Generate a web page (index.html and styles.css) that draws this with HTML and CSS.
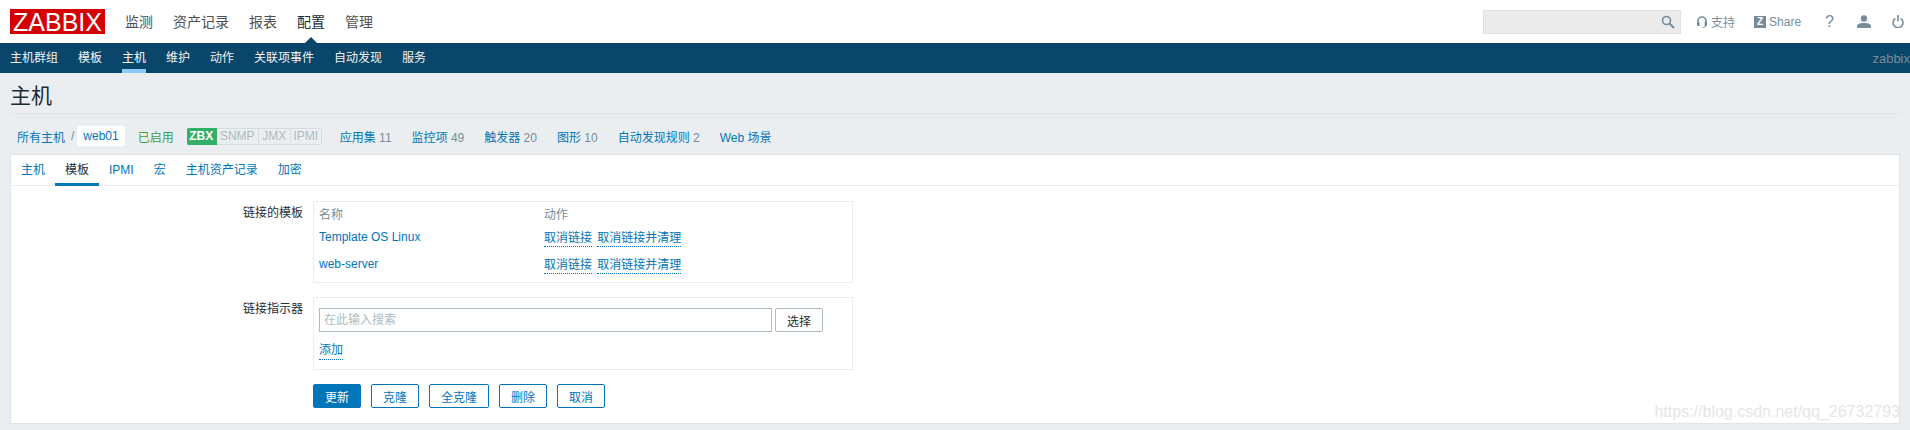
FILE: index.html
```html
<!DOCTYPE html>
<html lang="zh-CN">
<head>
    <meta charset="UTF-8">
    <title>主机</title>
    <link rel="stylesheet" href="styles.css">
</head>
<body>
    <header class="Header">
        <div class="logo">ZABBIX</div>
        <nav class="topnav">
            <a href="#">监测</a>
            <a href="#">资产记录</a>
            <a href="#">报表</a>
            <a href="#" class="active">配置</a>
            <a href="#">管理</a>
        </nav>
        <div class="tools">
            <div class="search">
                <svg class="icon-search" viewBox="0 0 14 14" width="14" height="14"><circle cx="5.5" cy="5.5" r="4" fill="none" stroke="#768d99" stroke-width="1.6"/><path d="M8.5 8.5L13 13" stroke="#768d99" stroke-width="2"/></svg>
            </div>
            <a href="#" class="tool support">
                <svg viewBox="0 0 10 12" width="10" height="12"><path d="M1 7V5a4 4 0 0 1 8 0v2" fill="none" stroke="#768d99" stroke-width="1.6"/><rect x="0" y="6" width="2.4" height="4" fill="#768d99"/><rect x="7.6" y="6" width="2.4" height="4" fill="#768d99"/><path d="M8.5 10c0 1-1.500 1.500-3 1.500" fill="none" stroke="#768d99"/></svg>
                <span>支持</span>
            </a>
            <a href="#" class="tool share"><span class="zbox">Z</span><span>Share</span></a>
            <a href="#" class="tool help">?</a>
            <a href="#" class="tool user">
                <svg viewBox="0 0 14 13" width="14" height="13"><circle cx="7" cy="3.500" r="3.200" fill="#768d99"/><path d="M0 13v-2c0-2 3-3 7-3s7 1 7 3v2z" fill="#768d99"/></svg>
            </a>
            <a href="#" class="tool power">
                <svg viewBox="0 0 12 13" width="12" height="13"><path d="M3.300 3.500a5 5 0 1 0 5.400 0" fill="none" stroke="#768d99" stroke-width="1.600"/><path d="M6 0v6.500" stroke="#768d99" stroke-width="1.600"/></svg>
            </a>
        </div>
    </header>
    <div class="subnav">
        <nav class="subnav-links">
            <a href="#">主机群组</a>
            <a href="#">模板</a>
            <a href="#" class="active">主机</a>
            <a href="#">维护</a>
            <a href="#">动作</a>
            <a href="#">关联项事件</a>
            <a href="#">自动发现</a>
            <a href="#">服务</a>
        </nav>
        <span class="server-name">zabbix</span>
    </div>
    <div class="Contents">
        <h1 class="page-title">主机</h1>
        <div class="crumbs">
            <a href="#" class="crumb-all">所有主机</a>
            <span class="crumb-sep">/</span>
            <a href="#" class="crumb-host">web01</a>
            <span class="status">已启用</span>
            <div class="tags">
                <span class="tag on">ZBX</span>
                <span class="tag snmp">SNMP</span>
                <span class="tag jmx">JMX</span>
                <span class="tag ipmi">IPMI</span>
            </div>
            <div class="host-links">
                <span><a href="#">应用集</a> 11</span>
                <span><a href="#">监控项</a> 49</span>
                <span><a href="#">触发器</a> 20</span>
                <span><a href="#">图形</a> 10</span>
                <span><a href="#">自动发现规则</a> 2</span>
                <span><a href="#">Web 场景</a></span>
            </div>
        </div>
        <div class="card">
            <div class="tabs">
                <a href="#">主机</a>
                <a href="#" class="active">模板</a>
                <a href="#">IPMI</a>
                <a href="#">宏</a>
                <a href="#">主机资产记录</a>
                <a href="#">加密</a>
            </div>
            <form class="form">
                <label class="form-label">链接的模板</label>
                <div class="box box-list">
                    <table class="list">
                        <tr class="list-head"><th>名称</th><th>动作</th></tr>
                        <tr>
                            <td><a href="#">Template OS Linux</a></td>
                            <td><a href="#" class="dotted">取消链接</a> <a href="#" class="dotted">取消链接并清理</a></td>
                        </tr>
                        <tr>
                            <td><a href="#">web-server</a></td>
                            <td><a href="#" class="dotted">取消链接</a> <a href="#" class="dotted">取消链接并清理</a></td>
                        </tr>
                    </table>
                </div>
                <label class="form-label">链接指示器</label>
                <div class="box box-search">
                    <div class="search-row">
                        <input type="text" class="text-input" placeholder="在此输入搜索">
                        <button type="button" class="btn-grey">选择</button>
                    </div>
                    <a href="#" class="dotted add-link">添加</a>
                </div>
                <div class="buttons">
                    <button type="button" class="btn primary">更新</button>
                    <button type="button" class="btn">克隆</button>
                    <button type="button" class="btn wide">全克隆</button>
                    <button type="button" class="btn">删除</button>
                    <button type="button" class="btn">取消</button>
                </div>
            </form>
        </div>
    </div>
    <div class="watermark">https://blog.csdn.net/qq_26732793</div>
</body>
</html>
```

FILE: styles.css
```css
body{
    margin: 0;
    width: 1910px;
    height: 430px;
    overflow: hidden;
    position: relative;
    background-color: #ebeef0;
    color: #1f2c33;
    font-family: "Liberation Sans", "Noto Sans CJK SC", sans-serif;
    font-size: 12px;
}
a{
    color: #0275b8;
    text-decoration: none;
}
.Header {
    display: flex;
    align-items: center;
    height: 43px;
    padding: 0 6px 0 10px;
    background-color: #ffffff;
}
.logo {
    width: 95px;
    height: 25px;
    line-height: 26px;
    background-color: #d40000;
    color: #ffffff;
    font-size: 25px;
    text-align: center;
}
.topnav {
    display: flex;
    gap: 20px;
    margin-left: 20px;
}
.topnav a {
    position: relative;
    color: #4f4f4f;
    font-size: 14px;
    line-height: 20px;
}
.topnav a.active {
    color: #1f2c33;
}
.topnav a.active::after {
    content: "";
    position: absolute;
    left: 6px;
    bottom: -13px;
    border-left: 8px solid transparent;
    border-right: 8px solid transparent;
    border-bottom: 8px solid #0a466a;
}
.tools {
    display: flex;
    align-items: center;
    margin-left: auto;
}
.search {
    display: flex;
    align-items: center;
    justify-content: flex-end;
    box-sizing: border-box;
    width: 198px;
    height: 24px;
    padding-right: 5px;
    background-color: #ebebeb;
    border: 1px solid #e0e0e0;
}
.tool {
    display: flex;
    align-items: center;
    color: #768d99;
}
.support {
    gap: 4px;
    margin-left: 16px;
}
.share {
    gap: 3px;
    margin-left: 19px;
}
.zbox {
    width: 12px;
    height: 12px;
    line-height: 12px;
    background-color: #768d99;
    color: #ffffff;
    font-size: 10px;
    font-weight: bold;
    text-align: center;
}
.help {
    margin-left: 24px;
    font-size: 16px;
}
.user {
    margin-left: 23px;
}
.power {
    margin-left: 21px;
}
.subnav {
    display: flex;
    align-items: center;
    justify-content: space-between;
    height: 30px;
    padding-left: 10px;
    background-color: #0a466a;
}
.subnav-links {
    display: flex;
    gap: 20px;
}
.subnav-links a {
    height: 30px;
    line-height: 30px;
    box-sizing: border-box;
    color: #f2f2f2;
}
.subnav-links a.active {
    color: #ffffff;
    border-bottom: 4px solid #8ccbf7;
}
.server-name {
    color: #768d99;
    font-size: 13px;
}
.Contents {
    padding: 0 10px;
}
.page-title {
    height: 40px;
    margin: 0;
    border-bottom: 1px solid #dfe4e7;
    font-size: 21px;
    font-weight: normal;
    line-height: 46px;
}
.crumbs {
    display: flex;
    align-items: center;
    height: 20px;
    padding: 12px 0 8px 7px;
}
.crumb-sep {
    margin: 0 3px 0 6px;
    color: #768d99;
}
.crumb-host {
    padding: 0 6px;
    line-height: 20px;
    background-color: #ffffff;
    border-radius: 2px;
}
.status {
    margin-left: 13px;
    color: #429e47;
}
.tags {
    display: flex;
    height: 17px;
    margin-left: 13px;
}
.tag {
    box-sizing: border-box;
    line-height: 15px;
    text-align: center;
    border: 1px solid #d5dbde;
    border-left-width: 0;
    color: #acbbc2;
}
.tag.on {
    width: 30px;
    background-color: #34af67;
    border-color: #34af67;
    color: #ffffff;
    font-weight: bold;
    border-radius: 2px 0 0 2px;
}
.tag.snmp {
    width: 42px;
}
.tag.jmx {
    width: 32px;
}
.tag.ipmi {
    width: 31px;
    border-radius: 0 2px 2px 0;
}
.host-links {
    display: flex;
    gap: 20px;
    margin-left: 18px;
    color: #768d99;
}
.card {
    box-sizing: border-box;
    height: 270px;
    background-color: #ffffff;
    border: 1px solid #dfe4e7;
}
.tabs {
    display: flex;
    height: 31px;
    box-sizing: border-box;
    border-bottom: 1px solid #ebeef0;
}
.tabs a {
    box-sizing: border-box;
    height: 31px;
    padding: 0 10px;
    line-height: 30px;
}
.tabs a.active {
    color: #1f2c33;
    border-bottom: 3px solid #0275b8;
}
.form {
    display: grid;
    grid-template-columns: 292px 540px;
    gap: 14px 10px;
    padding-top: 15px;
}
.form-label {
    padding-top: 4px;
    line-height: 16px;
    text-align: right;
}
.box {
    box-sizing: border-box;
    padding: 5px;
    border: 1px solid #ebeef0;
}
.box-list {
    height: 82px;
}
.list {
    border-collapse: collapse;
}
.list th, .list td {
    padding: 0;
    font-weight: normal;
    text-align: left;
}
.list th:first-child, .list td:first-child {
    width: 225px;
}
.list-head th {
    height: 16px;
    line-height: 16px;
    color: #768d99;
}
.list td {
    height: 27px;
}
.dotted {
    padding-bottom: 1px;
    border-bottom: 1px dotted #0275b8;
}
.list .dotted + .dotted {
    margin-left: 2px;
}
.box-search {
    height: 73px;
    padding-top: 10px;
}
.search-row {
    display: flex;
    gap: 3px;
}
.text-input {
    box-sizing: border-box;
    width: 453px;
    height: 24px;
    padding: 0 4px;
    border: 1px solid #acbbc2;
    font-family: inherit;
    font-size: 12px;
}
.text-input::placeholder {
    color: #acbbc2;
}
.btn-grey {
    box-sizing: border-box;
    width: 48px;
    height: 24px;
    padding: 0;
    background-color: #ffffff;
    border: 1px solid #acbbc2;
    border-radius: 2px;
    color: #1f2c33;
    font-family: inherit;
    font-size: 12px;
}
.add-link {
    display: inline-block;
    margin-top: 11px;
    line-height: 15px;
}
.buttons {
    display: flex;
    grid-column: 2;
    gap: 10px;
}
.btn {
    box-sizing: border-box;
    width: 48px;
    height: 24px;
    padding: 0;
    background-color: #ffffff;
    border: 1px solid #0275b8;
    border-radius: 2px;
    color: #0275b8;
    font-family: inherit;
    font-size: 12px;
}
.btn.wide {
    width: 60px;
}
.btn.primary {
    background-color: #0275b8;
    color: #ffffff;
}
.watermark {
    position: absolute;
    right: 10px;
    top: 403px;
    color: #e6e6e6;
    font-size: 16px;
}
```
